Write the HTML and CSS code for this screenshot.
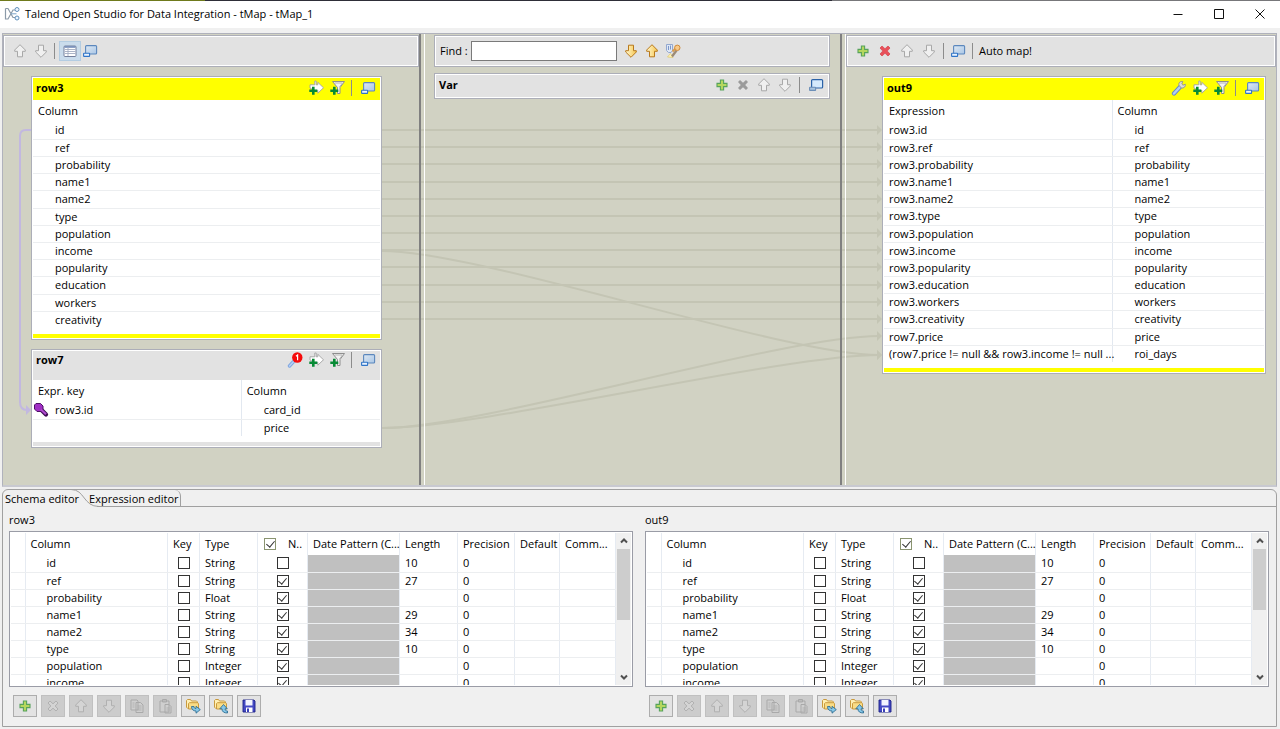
FILE: index.html
```
<!DOCTYPE html>
<html lang="en">
<head>
  <meta charset="UTF-8">
  <title>Talend Open Studio for Data Integration - tMap - tMap_1</title>
  <link rel="stylesheet" href="styles.css">
</head>
<body>
  <!-- icon set -->
  <svg class="sprite" aria-hidden="true">
    <linearGradient id="gold" x1="0" y1="0" x2="1" y2="0"><stop offset="0" stop-color="#fff8d0"/><stop offset="1" stop-color="#f6c650"/></linearGradient>
    <linearGradient id="screen" x1="0" y1="0" x2="1" y2="1"><stop offset="0" stop-color="#dfe9f3"/><stop offset="1" stop-color="#a9c6e6"/></linearGradient>
    <symbol id="up" viewBox="0 0 16 16"><path d="M8 1.700 13.300 7v1.300h-2.800v5.500h-5V8.300H2.700V7z"/></symbol>
    <symbol id="down" viewBox="0 0 16 16"><path d="M8 14.300 13.300 9V7.700h-2.800V2.200h-5v5.500H2.700V9z"/></symbol>
    <symbol id="plus" viewBox="0 0 16 16"><path d="M6.400 3h3.200v3.400H13v3.200H9.600V13H6.400V9.600H3V6.400h3.400z" fill="#b5d75e" stroke="#57a35c" stroke-width="1.100"/></symbol>
    <symbol id="cross" viewBox="0 0 16 16"><path d="m3 5 2-2 3 2.800L11 3l2 2-2.800 3 2.800 3-2 2-3-2.800L5 13l-2-2 2.800-3z"/></symbol>
    <symbol id="window" viewBox="0 0 16 16"><rect x="3.600" y="2.600" width="11" height="8.400" rx="1" fill="url(#screen)" stroke="#5b87bd" stroke-width="1.100"/><rect x="1.600" y="10.200" width="6" height="3.200" rx=".5" fill="#e8f3ff" stroke="#2f74c8" stroke-width="1.100"/></symbol>
    <symbol id="window-on" viewBox="0 0 16 16"><rect x="3.600" y="2.600" width="11" height="8.400" rx="1" fill="#d4e9fc" stroke="#2a62a8" stroke-width="1.200"/><rect x="1.600" y="10.200" width="6" height="3.200" rx=".5" fill="#a9c4df" stroke="#6c8fb8" stroke-width="1.100"/></symbol>
    <symbol id="grid" viewBox="0 0 16 16"><rect x="2" y="3" width="12" height="10.500" rx="1" fill="#fff" stroke="#75809c"/><path d="M2.500 4h11" stroke="#6a84b4" stroke-width="1.500"/><path d="M3 6.500h10.500M3 8.500h10.500M3 10.500h10.500M6 4v9" stroke="#a3adc2" stroke-width=".9"/></symbol>
    <symbol id="add-output" viewBox="0 0 16 16"><path d="M2 8V4.800h4.800V1h1.400v3.800h1.600V2.300l5.700 5.500-5.700 5.400v-2.800H6z" fill="#fff" stroke="#a0a0a0" stroke-width=".9"/><path d="M5.300 6.800v8M1.300 10.800h8" stroke="#078a35" stroke-width="2.600"/></symbol>
    <symbol id="add-filter" viewBox="0 0 16 16"><path d="M3.500 1.500h12l-4.500 6v6H8.500v-6z" fill="#f4f4f4" stroke="#8e8e8e"/><path d="M5.500 3h8l-3 4" fill="none" stroke="#b5b5b5"/><path d="M5.300 6.800v8M1.300 10.800h8" stroke="#078a35" stroke-width="2.600"/></symbol>
    <symbol id="wrench" viewBox="0 0 16 16"><path d="m3 13.500 6-6.500" stroke="#6489c8" stroke-width="4.200" stroke-linecap="round"/><path d="m3 13.500 6-6.500" stroke="#b2cdf3" stroke-width="2.400" stroke-linecap="round"/><path d="M14.300 4.200 12 5.200 10.800 4l1-2.500C9 1 7.200 3 8 5.300L10.300 8c2.400.6 4.500-1.300 4-3.800z" fill="#dcdcdc" stroke="#8d8d96" stroke-width=".9"/></symbol>
    <symbol id="alert" viewBox="0 0 16 16"><path d="m2.500 14 5-5.500" stroke="#7fa5df" stroke-width="3.400" stroke-linecap="round"/><path d="m2.500 14 5-5.500" stroke="#b5d0f5" stroke-width="1.600" stroke-linecap="round"/><circle cx="10.300" cy="5.500" r="5.200" fill="#f50a0a"/><path d="M9 4.300 10.600 3v5.300" fill="none" stroke="#fff" stroke-width="1.200"/></symbol>
    <symbol id="marker" viewBox="0 0 16 16"><path d="M1.500 1.500h6v6L6 9.500H3.500l-2-2z" fill="#dfe8f6" stroke="#93a8cf"/><path d="M3.500 3v4M5.500 2.500v4" stroke="#7c96c8"/><path d="m2.500 14 3-3.500 2.500 4z" fill="#fff6b8" stroke="#e0c66a" stroke-width=".7"/><path d="m7 13.500 4.500-6" stroke="#9c8b76" stroke-width="2.400"/><path d="m7.500 8.500 3-3" stroke="#d99b4a" stroke-width="2"/><circle cx="12.300" cy="4.800" r="2.700" fill="#f8c988" stroke="#cf8a3a"/></symbol>
    <symbol id="key" viewBox="0 0 16 16"><path d="m8 7.500 5 5" stroke="#3d0b52" stroke-width="4.200" stroke-linecap="round"/><path d="M3 1.500h4.500L10 4v3L8 9.500H4L1.500 7V3z" fill="#a02fc4" stroke="#4d0e68"/><path d="m8 7.500 5 4.800" stroke="#b04ad0" stroke-width="2.200"/></symbol>
    <symbol id="copy" viewBox="0 0 16 16"><path d="M2 2h6l1 1v9H2z M7 4.500h4.500L14 7v7.500H7z" fill="#cfcfcf" stroke="#a9a9a9"/><path d="M8.500 8h4M8.500 10h4M8.500 12h4M3.500 5h2M3.500 7h2M3.500 9h2" stroke="#a9a9a9" stroke-width=".8"/></symbol>
    <symbol id="paste" viewBox="0 0 16 16"><path d="M3 3h9v11H3z M5.500 1.500h4V4h-4z M8 6.500h4l2 2V15H8z" fill="#cfcfcf" stroke="#a9a9a9"/><path d="M9.500 10h3M9.500 12h3" stroke="#a9a9a9" stroke-width=".8"/></symbol>
    <symbol id="import" viewBox="0 0 16 16"><path d="M2.500 10.500 1.500 9V2.500l1-1h3l1 1.500h5l1 1V6" fill="#fff0b4" stroke="#c99a3e"/><path d="M3.500 11V5.500l1-.8h8.300l.7 1V11z" fill="#f9dc86" stroke="#c99a3e"/><path d="M6.500 8.500c0 3 2 4.500 4.500 4.500v2.200l4.300-3.600L11 8.300v2.200c-1.300 0-2-.6-2-2z" fill="#86c7e8" stroke="#23648c" stroke-width=".8"/></symbol>
    <symbol id="export" viewBox="0 0 16 16"><path d="M2.500 10.500 1.500 9V2.500l1-1h3l1 1.500h5l1 1V6" fill="#fff0b4" stroke="#c99a3e"/><path d="M3.500 11V5.500l1-.8h8.300l.7 1V11z" fill="#f9dc86" stroke="#c99a3e"/><path d="M14.500 15c-3.500 0-5.500-1.200-5.500-4.200H6.800l3.700-4.300 3.800 4.300h-2.200c0 1.700.9 2.200 2.400 2.200z" fill="#86c7e8" stroke="#23648c" stroke-width=".8"/></symbol>
    <symbol id="save" viewBox="0 0 16 16"><path d="M2 2h11l1 1v11H2z" fill="#4449c4" stroke="#1c1f86" stroke-width=".9"/><path d="M4.500 2h7v5.500h-7z" fill="#f2f4ff"/><path d="M5 9.500h6.500V14H5z" fill="#fff"/><path d="M6 10.500h2V14H6z" fill="#3a3fb8"/></symbol>
  </svg>

  <header class="titlebar">
    <svg class="app-icon" viewBox="0 0 16 16"><path d="M1.500 2.500H4l5 9h2M1.500 2.500v10.500H4l5-9h2" fill="none" stroke="#8b9aa8" stroke-width="1.200"/><circle cx="13" cy="3.500" r="2" fill="#eef6ff" stroke="#5f90bb"/><circle cx="13" cy="12" r="2" fill="#eef6ff" stroke="#5f90bb"/><path d="M7 7.800h5.500" fill="none" stroke="#7ba4c8"/></svg>
    <h1>Talend Open Studio for Data Integration - tMap - tMap_1</h1>
    <button aria-label="Minimize"><svg viewBox="0 0 10 10"><path d="M.5 5.500h9"/></svg></button>
    <button aria-label="Maximize"><svg viewBox="0 0 10 10"><path d="M.5.5h9v9h-9z"/></svg></button>
    <button aria-label="Close"><svg viewBox="0 0 10 10"><path d="m.5.5 9 9m0-9-9 9"/></svg></button>
  </header>

  <main class="mapper" id="mapper">
    <svg class="links" id="links"></svg>

    <section class="pane pane-input">
      <div class="toolbar">
        <button class="off" aria-label="Move up"><svg><use href="#up"/></svg></button>
        <button class="off" aria-label="Move down"><svg><use href="#down"/></svg></button>
        <i class="sep"></i>
        <button class="pressed" aria-label="Table view"><svg><use href="#grid"/></svg></button>
        <button aria-label="Minimize all"><svg><use href="#window"/></svg></button>
      </div>

      <article class="card active">
        <header>
          <h2>row3</h2>
          <button aria-label="Add output"><svg><use href="#add-output"/></svg></button>
          <button aria-label="Add filter"><svg><use href="#add-filter"/></svg></button>
          <i class="sep"></i>
          <button aria-label="Minimize row3"><svg><use href="#window"/></svg></button>
        </header>
        <table class="list list-row3">
          <thead><tr><th>Column</th></tr></thead>
          <tbody id="row3"></tbody>
        </table>
      </article>

      <article class="card lookup">
        <header>
          <h2>row7</h2>
          <button aria-label="Lookup settings"><svg><use href="#alert"/></svg></button>
          <button aria-label="Add output"><svg><use href="#add-output"/></svg></button>
          <button aria-label="Add filter"><svg><use href="#add-filter"/></svg></button>
          <i class="sep"></i>
          <button aria-label="Minimize row7"><svg><use href="#window"/></svg></button>
        </header>
        <table class="list list-row7">
          <thead><tr><th>Expr. key</th><th>Column</th></tr></thead>
          <tbody id="row7">
            <tr><td class="keyed"><span><svg><use href="#key"/></svg>row3.id</span></td><td>card_id</td></tr>
            <tr><td></td><td>price</td></tr>
          </tbody>
        </table>
      </article>
    </section>

    <div class="sash"></div>

    <section class="pane pane-var">
      <div class="toolbar find">
        <label for="find">Find :</label>
        <input type="text" id="find">
        <button class="gold" aria-label="Find next"><svg><use href="#down"/></svg></button>
        <button class="gold" aria-label="Find previous"><svg><use href="#up"/></svg></button>
        <button aria-label="Highlight"><svg><use href="#marker"/></svg></button>
      </div>
      <div class="card var">
        <header>
          <h2>Var</h2>
          <button aria-label="Add variable"><svg><use href="#plus"/></svg></button>
          <button class="grey" aria-label="Remove variable"><svg><use href="#cross"/></svg></button>
          <button class="off" aria-label="Move up"><svg><use href="#up"/></svg></button>
          <button class="off" aria-label="Move down"><svg><use href="#down"/></svg></button>
          <i class="sep"></i>
          <button aria-label="Minimize Var"><svg><use href="#window-on"/></svg></button>
        </header>
      </div>
    </section>

    <div class="sash"></div>

    <section class="pane pane-output">
      <div class="toolbar">
        <button aria-label="Add output table"><svg><use href="#plus"/></svg></button>
        <button class="red" aria-label="Remove output table"><svg><use href="#cross"/></svg></button>
        <button class="off" aria-label="Move up"><svg><use href="#up"/></svg></button>
        <button class="off" aria-label="Move down"><svg><use href="#down"/></svg></button>
        <i class="sep"></i>
        <button aria-label="Minimize all"><svg><use href="#window"/></svg></button>
        <i class="sep"></i>
        <button class="automap">Auto map!</button>
      </div>

      <article class="card active">
        <header>
          <h2>out9</h2>
          <button aria-label="Output settings"><svg><use href="#wrench"/></svg></button>
          <button aria-label="Add output"><svg><use href="#add-output"/></svg></button>
          <button aria-label="Add filter"><svg><use href="#add-filter"/></svg></button>
          <i class="sep"></i>
          <button aria-label="Minimize out9"><svg><use href="#window"/></svg></button>
        </header>
        <table class="list list-out9">
          <thead><tr><th>Expression</th><th>Column</th></tr></thead>
          <tbody id="out9"></tbody>
        </table>
      </article>
    </section>
  </main>

  <section class="folder">
    <nav class="tabs">
      <button class="tab selected">Schema editor</button>
      <svg class="tab-curve" viewBox="0 0 28 18"><path d="M0 .5c14 0 12 17 28 17"/></svg>
      <button class="tab last">Expression editor</button>
      <span class="tab-rest"></span>
    </nav>
    <div class="editors" id="editors"></div>
  </section>

  <script>
    const columns = ["id", "ref", "probability", "name1", "name2", "type",
      "population", "income", "popularity", "education", "workers", "creativity"];

    const schema = [
      ["id", "String", false, "10"],
      ["ref", "String", true, "27"],
      ["probability", "Float", true, ""],
      ["name1", "String", true, "29"],
      ["name2", "String", true, "34"],
      ["type", "String", true, "10"],
      ["population", "Integer", true, ""],
      ["income", "Integer", true, ""]
    ];

    function renderTables() {
      document.getElementById("row3").innerHTML =
        columns.map(name => `<tr><td>${name}</td></tr>`).join("");

      const outputs = columns.map(name => ["row3." + name, name]);
      outputs.push(["row7.price", "price"]);
      outputs.push(["(row7.price != null &amp;&amp; row3.income != null ...", "roi_days"]);
      document.getElementById("out9").innerHTML =
        outputs.map(([expr, name]) => `<tr><td>${expr}</td><td>${name}</td></tr>`).join("");
    }

    function toolButton(icon, label, state = "") {
      return `<button aria-label="${label}" ${state}><svg><use href="#${icon}"/></svg></button>`;
    }

    function renderEditor(name) {
      const rows = schema.map(([col, type, nullable, length]) => `
        <tr>
          <td></td>
          <td class="name">${col}</td>
          <td class="tick"><input type="checkbox" aria-label="${col} key"></td>
          <td>${type}</td>
          <td class="tick"><input type="checkbox" aria-label="${col} nullable" ${nullable ? "checked" : ""}></td>
          <td class="pattern"></td>
          <td>${length}</td>
          <td>0</td>
          <td></td>
          <td></td>
        </tr>`).join("");

      return `
        <div class="editor">
          <h3>${name}</h3>
          <div class="grid-box">
            <div class="grid-view">
              <table class="schema">
                <colgroup>
                  <col class="c-mark"><col><col class="c-key"><col class="c-type"><col class="c-null">
                  <col class="c-date"><col class="c-len"><col class="c-prec"><col class="c-def"><col class="c-com">
                </colgroup>
                <thead>
                  <tr>
                    <th></th><th>Column</th><th>Key</th><th>Type</th>
                    <th class="null-head"><label><input type="checkbox" checked>N..</label></th>
                    <th>Date Pattern (C...</th><th>Length</th><th>Precision</th><th>Default</th><th>Comm...</th>
                  </tr>
                </thead>
                <tbody>${rows}</tbody>
              </table>
            </div>
            <div class="scroll scroll-${name}">
              <svg viewBox="0 0 8 6"><path d="m1 4.500 3-3 3 3"/></svg>
              <div class="thumb"></div>
              <svg viewBox="0 0 8 6"><path d="m1 1.500 3 3 3-3"/></svg>
            </div>
          </div>
          <div class="actions">
            ${toolButton("plus", "Add column")}
            ${toolButton("cross", "Remove column", "disabled")}
            ${toolButton("up", "Move up", "disabled")}
            ${toolButton("down", "Move down", "disabled")}
            ${toolButton("copy", "Copy", "disabled")}
            ${toolButton("paste", "Paste", "disabled")}
            ${toolButton("import", "Import schema")}
            ${toolButton("export", "Export schema")}
            ${toolButton("save", "Save schema")}
          </div>
        </div>`;
    }

    function anchor(id, index, side) {
      const base = document.getElementById("links").getBoundingClientRect();
      const row = document.getElementById(id).rows[index].getBoundingClientRect();
      const card = document.getElementById(id).closest(".card").getBoundingClientRect();
      return { x: card[side] - base.left, y: Math.floor(row.top + row.height / 2 - base.top) };
    }

    function drawLinks() {
      const pairs = columns.map((name, i) => ["row3", i, i]);
      pairs.push(["row7", 1, 12], ["row3", 7, 13], ["row7", 1, 13]);

      let shapes = "";
      pairs.forEach(([source, from, to]) => {
        const a = anchor(source, from, "right");
        const b = anchor("out9", to, "left");
        // rows on the same line differ by a rounding pixel at most
        if (Math.abs(a.y - b.y) < 3) a.y = b.y;
        const bend = (b.x - a.x) * 0.2;
        shapes += `<path d="M${a.x} ${a.y}C${a.x + bend} ${a.y} ${b.x - bend} ${b.y} ${b.x - 3} ${b.y}"/>`;
        shapes += `<path class="head" d="M${b.x} ${b.y}l-5 -5v10z"/>`;
      });

      // lookup key link runs down the left side of the input tables
      const top = anchor("row3", 0, "left");
      const key = anchor("row7", 0, "left");
      const x = top.x - 11;
      shapes += `<path class="key" d="M${top.x} ${top.y}h-5q-6 0 -6 6V${key.y - 8}q0 8 7 8"/>`;
      shapes += `<path class="key-head" d="M${key.x} ${key.y}l-5 -5v10z"/>`;
      document.getElementById("links").innerHTML = shapes;
    }

    renderTables();
    document.getElementById("editors").innerHTML = renderEditor("row3") + renderEditor("out9");
    drawLinks();
    window.addEventListener("resize", drawLinks);
  </script>
</body>
</html>
```
FILE: styles.css
```
* {
  box-sizing: border-box;
}

body {
  margin: 0;
  min-height: 100vh;
  display: flex;
  flex-direction: column;
  background: #f0f0f0;
  color: #000;
  font-family: "Open Sans", "Noto Sans", sans-serif;
  font-size: 11px;
  line-height: 16px;
}

h1,
h2,
h3 {
  margin: 0;
  font-size: 11px;
  font-weight: normal;
}

button {
  padding: 0;
  border: none;
  background: none;
  color: inherit;
  font: inherit;
}

svg {
  display: block;
  width: 16px;
  height: 16px;
}

.sprite {
  position: absolute;
  width: 0;
  height: 0;
}

/* title bar */
.titlebar {
  display: flex;
  align-items: center;
  height: 28px;
  padding-left: 4px;
  background: linear-gradient(to right, #6f7a1c 16%, #2e2e38 16%, #2e2e38 65%, #77777a 65%) top / 100% 1px no-repeat #fff;
}

.titlebar h1 {
  flex: 1;
  margin-left: 5px;
}

.titlebar button {
  display: flex;
  justify-content: center;
  width: 41px;
}

.titlebar button svg {
  width: 10px;
  height: 10px;
  fill: none;
  stroke: #111;
}

/* mapper */
.mapper {
  position: relative;
  flex: 1;
  display: grid;
  grid-template-columns: 416fr 6px 415fr 6px 430fr;
  margin: 5px 3px 0 2px;
  border: 1px solid #b0b2bc;
  border-bottom: 2px solid #c8c9d0;
  background: #d1d2c3;
}

.links {
  position: absolute;
  inset: 0;
  width: 100%;
  height: 100%;
  fill: none;
  stroke: #c4c5b4;
  stroke-width: 2;
  pointer-events: none;
}

.links .head {
  fill: #c4c5b4;
  stroke: none;
}

.links .key {
  stroke: #c2b8e0;
}

.links .key-head {
  fill: #c2b8e0;
  stroke: none;
}

.sash {
  position: relative;
  border-left: 2px solid #808080;
  border-right: 1px solid #fff;
}

.pane {
  position: relative;
  padding-top: 1px;
}

.toolbar,
.card {
  border: 1px solid #acaeb8;
  background: #e2e2e2;
  box-shadow: inset 0 0 0 1px #fff;
}

.toolbar {
  display: flex;
  align-items: center;
  gap: 5px;
  height: 32px;
  padding: 0 8px;
}

.sep {
  width: 1px;
  height: 16px;
  background: #8c8c8c;
}

.pane-var .toolbar {
  margin: 0 10px 6px 9px;
  padding-left: 5px;
}

.find label {
  margin-right: -2px;
}

.find input {
  width: 146px;
  height: 20px;
  margin-right: 1px;
  border: 1px solid #7a7a7a;
  background: #fff;
  font: inherit;
}

.pressed {
  margin: 0 -4px 0 -1px;
  padding: 1px 2px;
  border: 1px solid #b4cde2;
  background: #cadcec;
}

.off svg {
  fill: #f0f0f0;
  stroke: #a8a8a8;
}

.grey svg {
  fill: #9b9b9b;
}

.red svg {
  fill: #e8505a;
  stroke: #dc5a62;
}

.gold svg {
  fill: url(#gold);
  stroke: #b8791c;
}

.pane-output .toolbar {
  gap: 6px;
}

/* table cards */
.card {
  padding: 1px;
}

.card header {
  display: flex;
  align-items: center;
  gap: 5px;
  height: 22px;
  padding: 0 4px 2px 3px;
}

.card h2 {
  flex: 1;
  font-weight: bold;
}

.card .sep {
  margin: 0 3px 0 1px;
}

.pane-input .card {
  margin: 9px 37px 0 28px;
}

.pane-output .card {
  margin: 9px 10px 0 36px;
}

.pane-var .card {
  margin: 0 10px 0 9px;
}

.active {
  background: #ff0;
}

.pane .lookup header {
  height: 29px;
  align-items: flex-start;
  padding-top: 1px;
}

.list {
  width: 100%;
  border-collapse: collapse;
  table-layout: fixed;
  background: #fff;
  margin-bottom: 4px;
  border-bottom: 6px solid #fff;
}

.list-row3 {
  height: 234px;
}

.list-out9 {
  height: 268px;
}

.list th {
  height: 22px;
  padding: 0 5px;
  font-weight: normal;
  text-align: left;
}

.list td {
  height: 17px;
  padding: 0 5px;
  border-bottom: 1px solid #eceef0;
  line-height: 16px;
  white-space: nowrap;
}

.list th + th,
.list td + td {
  border-left: 1px solid #e2e8f0;
}

.list td + td,
.list-row3 td {
  padding-left: 22px;
}

.list-out9 th:first-child,
.list-row7 th:first-child {
  width: 60%;
}

.list .keyed {
  padding-left: 0;
}

.keyed span {
  display: flex;
  gap: 6px;
}

/* tab folder */
.folder {
  margin: 2px 3px 2px 2px;
  border: 1px solid #a0a0a0;
  border-radius: 6px 6px 0 0;
}

.tabs {
  display: flex;
  height: 17px;
}

.tab {
  padding-left: 2px;
}

.tab-curve {
  width: 28px;
  height: 18px;
  margin: -1px -10px 0 -8px;
  fill: none;
  stroke: #a0a0a0;
}

.last {
  padding: 0 1px 0 0;
  border-right: 1px solid #a0a0a0;
  border-radius: 0 6px 0 0;
}

.tab-rest {
  flex: 1;
  margin-left: -84px;
  border-bottom: 1px solid #a0a0a0;
}

.editors {
  display: grid;
  grid-template-columns: 1fr 1fr;
  gap: 12px;
  padding: 5px 7px 9px 6px;
}

.editor h3 {
  height: 19px;
}

.grid-box {
  display: flex;
  height: 156px;
  padding: 1px;
  border: 1px solid #9a9ca6;
  background: #fff;
}

.grid-view {
  flex: 1;
  overflow: hidden;
}

.schema {
  width: 100%;
  border-collapse: collapse;
  table-layout: fixed;
}

.c-mark { width: 14px; }
.c-key { width: 32px; }
.c-type { width: 58px; }
.c-null { width: 50px; }
.c-date { width: 92px; }
.c-len { width: 58px; }
.c-prec { width: 57px; }
.c-def { width: 45px; }
.c-com { width: 56px; }

.schema th,
.schema td {
  height: 17px;
  padding: 0 0 0 5px;
  border-right: 1px solid #e6ebf2;
  text-align: left;
  font-weight: normal;
  white-space: nowrap;
  line-height: 16px;
}

.schema th {
  height: 22px;
}

.schema td {
  border-bottom: 1px solid #eceef0;
}

.schema .name {
  padding-left: 21px;
}

.schema .tick {
  padding: 0;
}

.schema .pattern {
  background: #c0c0c0;
}

.schema input {
  appearance: none;
  display: grid;
  place-items: center;
  width: 12px;
  height: 12px;
  margin: 0 auto;
  border: 1px solid #333;
  background: #fff;
}

.schema input:checked::before {
  content: "";
  width: 4px;
  height: 7px;
  margin-top: -2px;
  border: solid #333;
  border-width: 0 1px 1px 0;
  transform: rotate(40deg);
}

.null-head label {
  display: flex;
  align-items: center;
  gap: 12px;
}

.schema .null-head input {
  margin: 0 0 0 1px;
  border-color: #8a9470;
}

.scroll {
  display: flex;
  flex-direction: column;
  align-items: center;
  width: 15px;
  background: #f0f0f0;
}

.scroll svg {
  width: 8px;
  height: 6px;
  margin: 5px 0;
  fill: none;
  stroke: #505050;
  stroke-width: 2;
}

.scroll svg:last-child {
  margin-top: auto;
}

.thumb {
  width: 13px;
  height: 71px;
  background: #cdcdcd;
}

.scroll-out9 .thumb {
  height: 61px;
}

.actions {
  display: flex;
  gap: 4px;
  padding: 8px 4px 0;
}

.actions button {
  display: grid;
  place-items: center;
  width: 24px;
  height: 22px;
  border: 1px solid #adadad;
  background: #e3e3e3;
}

.actions button:disabled {
  background: #cccccc;
  border-color: #c0c0c0;
}

.actions button:disabled svg {
  fill: #d4d4d4;
  stroke: #b0b0b0;
}
```
